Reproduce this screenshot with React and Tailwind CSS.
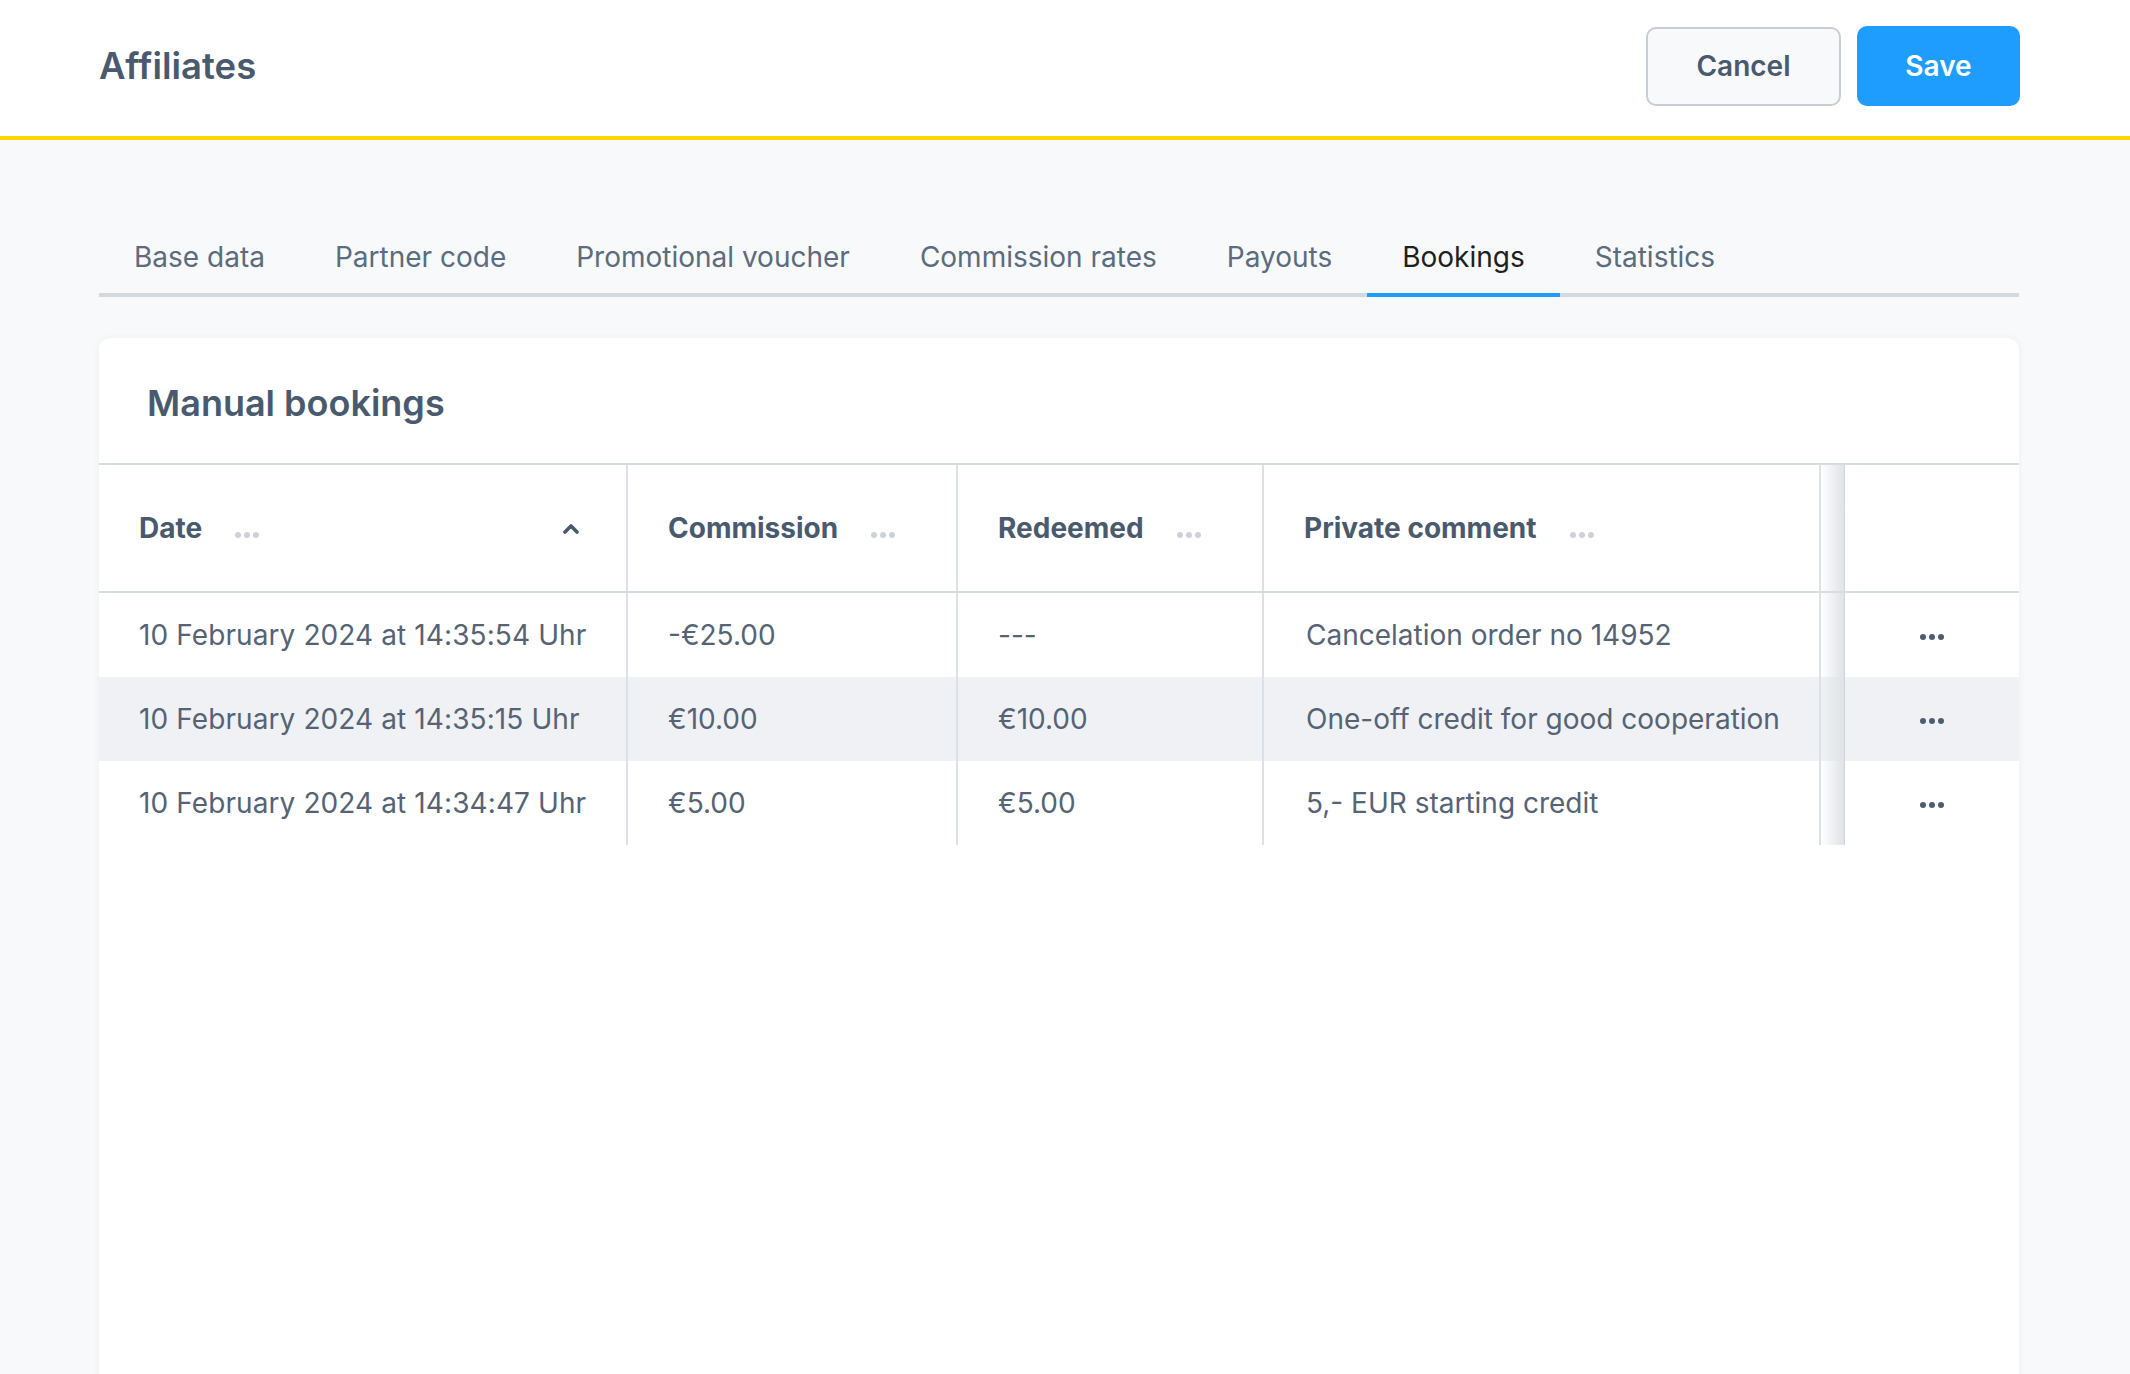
import React from "react";

const tabs = ["Base data", "Partner code", "Promotional voucher", "Commission rates", "Payouts", "Bookings", "Statistics"];

const rows = [
  { date: "10 February 2024 at 14:35:54 Uhr", commission: "-€25.00", redeemed: "---", comment: "Cancelation order no 14952" },
  { date: "10 February 2024 at 14:35:15 Uhr", commission: "€10.00", redeemed: "€10.00", comment: "One-off credit for good cooperation" },
  { date: "10 February 2024 at 14:34:47 Uhr", commission: "€5.00", redeemed: "€5.00", comment: "5,- EUR starting credit" },
];

function Dots({ light }) {
  const c = light ? "bg-[#cdd2d9]" : "bg-[#4d5c70]";
  return (
    <span className="inline-flex items-center gap-[3px]">
      <span className={`w-[6px] h-[6px] rounded-full ${c}`} />
      <span className={`w-[6px] h-[6px] rounded-full ${c}`} />
      <span className={`w-[6px] h-[6px] rounded-full ${c}`} />
    </span>
  );
}

function HeadCell({ label, width, sort }) {
  return (
    <div className={`${width} flex items-center pl-[40px] pr-[46px] border-r-2 border-[#dbe1e6]`}>
      <span className="font-bold">{label}</span>
      <span className="ml-[33px]"><Dots light /></span>
      {sort && (
        <svg className="ml-auto" width="18" height="12" viewBox="0 0 18 12" fill="none">
          <polyline points="3,10 9,4 15,10" stroke="#4a5a6e" strokeWidth="3.6" strokeLinecap="round" strokeLinejoin="round" />
        </svg>
      )}
    </div>
  );
}

export default function App() {
  return (
    <div className="w-full h-screen overflow-hidden bg-[#f7f9fa] text-[#4a5a6e]" style={{ fontFamily: "Inter, 'Noto Sans', sans-serif" }}>
      {/* header */}
      <header className="h-[140px] bg-white border-b-4 border-[#ffd500] flex items-center pl-[99px] pr-[110px]">
        <h1 className="text-[36.5px] font-semibold text-[#4a5a6e] -mt-[3px]">Affiliates</h1>
        <div className="ml-auto flex items-center gap-[16px] -mt-[4px]">
          <button className="w-[195px] h-[79px] rounded-[10px] border-2 border-[#c6cdd5] bg-[#f7f9fa] text-[28px] font-semibold text-[#4a5a6e]">Cancel</button>
          <button className="w-[163px] h-[80px] rounded-[10px] bg-[#1f9dff] text-[28px] font-semibold text-white">Save</button>
        </div>
      </header>

      <main className="pl-[99px] pr-[111px] pt-[97px]">
        {/* tabs */}
        <div className="flex border-b-4 border-[#d3dadf]">
          {tabs.map(t => (
            <div
              key={t}
              className={`px-[35px] pb-[16px] -mb-[4px] border-b-4 text-[28px] leading-[40px] ${t === "Bookings" ? "border-[#1f9dff] text-[#1d1f22]" : "border-transparent text-[#5c6b7d]"}`}
            >
              {t}
            </div>
          ))}
        </div>

        {/* card */}
        <div className="mt-[41px] bg-white rounded-[12px] shadow-[0_0_8px_rgba(20,40,60,0.05)] min-h-[1100px]">
          <div className="pl-[48px] pt-[43px] pb-[38px]">
            <h2 className="text-[36px] leading-[44px] font-semibold text-[#4a5a6e]">Manual bookings</h2>
          </div>

          <div className="border-t-2 border-[#d6dde2] text-[28px]">
            <div className="flex h-[128px] border-b-2 border-[#d6dde2]">
              <HeadCell label="Date" width="w-[529px]" sort />
              <HeadCell label="Commission" width="w-[330px]" />
              <HeadCell label="Redeemed" width="w-[306px]" />
              <HeadCell label="Private comment" width="w-[557px]" />
              <div className="w-[24px] bg-gradient-to-r from-white to-[#dfe2e6] border-r border-[#cfd4d9]" />
              <div className="flex-1" />
            </div>

            {rows.map((r, i) => (
              <div key={i} className={`flex h-[84px] text-[#556375] ${i === 1 ? "bg-[#eff1f4]" : ""}`}>
                <div className="w-[529px] flex items-center pl-[40px] border-r-2 border-[#dbe1e6] tracking-[0.1px]">{r.date}</div>
                <div className="w-[330px] flex items-center pl-[40px] border-r-2 border-[#dbe1e6]">{r.commission}</div>
                <div className="w-[306px] flex items-center pl-[40px] border-r-2 border-[#dbe1e6]">{r.redeemed}</div>
                <div className="w-[557px] flex items-center pl-[42px] border-r-2 border-[#dbe1e6] whitespace-nowrap">{r.comment}</div>
                <div className="w-[24px] bg-gradient-to-r from-transparent to-[#dfe2e6] border-r border-[#cfd4d9]" />
                <div className="flex-1 flex items-center justify-center pt-[4px]"><Dots /></div>
              </div>
            ))}
          </div>
        </div>
      </main>
    </div>
  );
}
